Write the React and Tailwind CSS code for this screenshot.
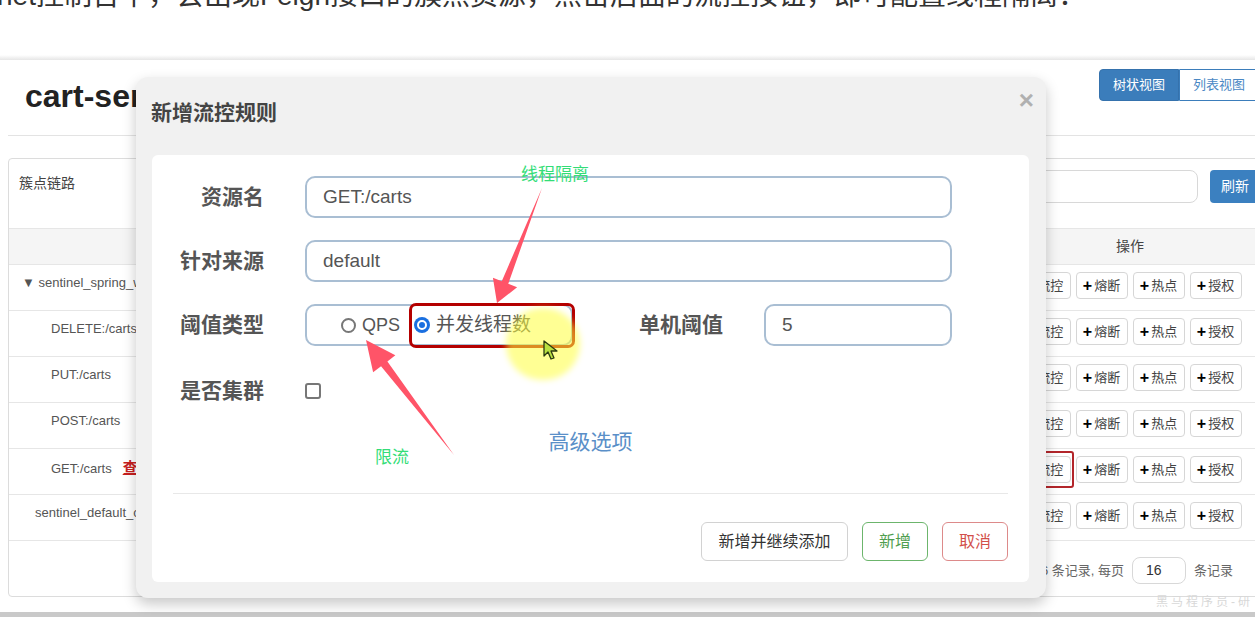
import React from "react";

const FONT = "font-['Liberation_Sans','Noto_Sans_CJK_SC',sans-serif]";

// simple tapered arrow polygon (tail -> tip)
function arrowPoints(tail, tip, headLen, headW, shaftW) {
    const dx = tip[0] - tail[0];
    const dy = tip[1] - tail[1];
    const len = Math.hypot(dx, dy);
    const ux = dx / len;
    const uy = dy / len;
    const px = -uy;
    const py = ux;
    const bx = tip[0] - ux * headLen;
    const by = tip[1] - uy * headLen;
    const pts = [
        tail,
        [bx + (px * shaftW) / 2, by + (py * shaftW) / 2],
        [bx + (px * headW) / 2, by + (py * headW) / 2],
        tip,
        [bx - (px * headW) / 2, by - (py * headW) / 2],
        [bx - (px * shaftW) / 2, by - (py * shaftW) / 2],
    ];
    return pts.map((p) => p.join(",")).join(" ");
}

const rows = [
    { name: "▼ sentinel_spring_web_context", pad: "pl-[13px]" },
    { name: "DELETE:/carts", pad: "pl-[42px]" },
    { name: "PUT:/carts", pad: "pl-[42px]" },
    { name: "POST:/carts", pad: "pl-[42px]" },
    { name: "GET:/carts", pad: "pl-[42px]", mark: true },
    { name: "sentinel_default_context", pad: "pl-[26px]" },
];

function ActionBtn({ label, highlight }) {
    return (
        <div className="relative">
            <div className="w-[52px] h-[27px] flex items-center justify-center gap-[2px] border border-[#d6d6d6] rounded-[4px] bg-white text-[13px] text-[#444]">
                <span className="font-bold text-[16px] text-black leading-none">+</span>
                <span>{label}</span>
            </div>
            {highlight && (
                <div className="absolute -left-[4px] -top-[5px] w-[59px] h-[37px] border-2 border-[#b3262b] rounded-[3px]" />
            )}
        </div>
    );
}

function Field({ label, children, className = "" }) {
    return (
        <div className={`flex items-center h-[42px] ${className}`}>
            <div className="w-[112px] text-right text-[21px] font-bold text-[#555]">
                {label}
            </div>
            <div className="ml-[41px] flex items-center">{children}</div>
        </div>
    );
}

export default function App() {
    return (
        <div className={`relative w-[1255px] h-[617px] overflow-hidden bg-white ${FONT}`}>
            {/* cut-off caption on top */}
            <div className="h-[55px] overflow-hidden">
                <p className="-mt-[20px] -ml-[3px] whitespace-nowrap text-[28px] leading-[32px] text-[#333]">
                    net控制台中，会出现Feign接口的簇点资源，点击后面的流控按钮，即可配置线程隔离：
                </p>
            </div>
            <div className="h-[5px] bg-gradient-to-b from-white to-[#e6e6e6]" />

            {/* sentinel page */}
            <div className="w-[1290px] px-2">
                <div className="flex h-[75px]">
                    <h1 className="pl-[17px] pt-[12px] text-[32px] font-bold text-[#222]">
                        cart-service
                    </h1>
                    <div className="ml-auto mr-[23px] mt-[9px] flex h-[32px] text-[13px]">
                        <div className="w-[80px] flex items-center justify-center bg-[#3b7dbb] text-white rounded-l-[4px] border border-[#3572ad]">
                            树状视图
                        </div>
                        <div className="w-[80px] flex items-center justify-center bg-white text-[#4a88c4] border border-[#3b7dbb] rounded-r-[4px]">
                            列表视图
                        </div>
                    </div>
                </div>
                <div className="border-t border-[#e3e3e3]" />

                <div className="mt-[22px] h-[439px] border border-[#dcdcdc] rounded-[4px]">
                    <div className="flex h-[69px]">
                        <div className="pl-[10px] pt-[14px] text-[14px] text-[#444]">簇点链路</div>
                        <div className="ml-auto mr-[21px] mt-[11px] flex gap-[12px]">
                            <div className="w-[170px] h-[33px] border border-[#d8d8d8] rounded-[8px]" />
                            <div className="w-[50px] h-[33px] flex items-center justify-center bg-[#3b80c0] text-white text-[14px] rounded-[4px]">
                                刷新
                            </div>
                        </div>
                    </div>
                    <div className="flex h-[37px] bg-[#f5f5f5] border-t border-b border-[#e6e6e6] text-[14px] text-[#444]">
                        <div className="flex-1" />
                        <div className="w-[260px] mr-[21px] flex items-center justify-center">操作</div>
                    </div>
                    {rows.map((r) => (
                        <div key={r.name} className="flex h-[46px] border-b border-[#e6e6e6]">
                            <div className={`flex-1 pt-[8px] ${r.pad} text-[13px] leading-[20px] text-[#555]`}>
                                {r.name}
                                {r.mark && (
                                    <span className="ml-[11px] text-[15px] font-bold text-[#c62020] underline font-['Noto_Sans_CJK_SC',serif]">
                                        查
                                    </span>
                                )}
                            </div>
                            <div className="w-[260px] mr-[21px] pt-[7px] flex justify-center gap-[5px]">
                                <ActionBtn label="流控" highlight={r.mark} />
                                <ActionBtn label="熔断" />
                                <ActionBtn label="热点" />
                                <ActionBtn label="授权" />
                            </div>
                        </div>
                    ))}
                    <div className="flex justify-end items-center mt-[16px] mr-[48px] gap-[8px] text-[13px] text-[#666]">
                        <span>共 6 条记录, 每页</span>
                        <div className="w-[54px] h-[27px] border border-[#d8d8d8] rounded-[8px] flex items-center pl-[13px] text-[14px] text-[#333]">
                            16
                        </div>
                        <span>条记录</span>
                    </div>
                </div>
            </div>

            {/* watermark + bottom bar */}
            <div className="absolute right-[2px] bottom-[6px] text-[12px] tracking-[3px] text-[#d8d8d8]">
                黑马程序员-研
            </div>
            <div className="absolute left-0 right-0 bottom-0 h-[5px] bg-[#c9c9c9]" />

            {/* modal */}
            <div className="absolute left-[136px] top-[77px] w-[910px] h-[521px] bg-[#f1f1f1] rounded-[12px] shadow-[0_6px_14px_rgba(0,0,0,0.22)]">
                <div className="flex h-[78px]">
                    <h2 className="pl-[15px] pt-[20px] text-[21px] font-bold text-[#444]">新增流控规则</h2>
                    <div className="ml-auto mr-[12px] mt-[4px] text-[26px] text-[#b0b0b0] font-bold">×</div>
                </div>
                <div className="ml-[16px] mr-[17px] h-[427px] bg-white rounded-[6px] pt-[21px]">
                    <Field label="资源名">
                        <div className="w-[647px] h-[42px] border-2 border-[#a9bed3] rounded-[10px] flex items-center pl-[16px] text-[19px] text-[#555]">
                            GET:/carts
                        </div>
                    </Field>
                    <Field label="针对来源" className="mt-[22px]">
                        <div className="w-[647px] h-[42px] border-2 border-[#a9bed3] rounded-[10px] flex items-center pl-[16px] text-[19px] text-[#555]">
                            default
                        </div>
                    </Field>
                    <Field label="阈值类型" className="mt-[22px]">
                        <div className="relative w-[268px] h-[42px] border-2 border-[#a9bed3] rounded-[10px] flex items-center pl-[34px] text-[#555]">
                            <span className="w-[15px] h-[15px] rounded-full border-2 border-[#777] bg-white" />
                            <span className="ml-[6px] text-[18px]">QPS</span>
                            <span className="ml-[14px] w-[16px] h-[16px] rounded-full bg-[#1a6fe0] flex items-center justify-center">
                                <span className="w-[10px] h-[10px] rounded-full border-2 border-white bg-[#1a6fe0]" />
                            </span>
                            <span className="ml-[6px] text-[19px]">并发线程数</span>
                            <div className="absolute left-[102px] -top-[3px] w-[166px] h-[45px] border-[3px] border-[#b40000] rounded-[7px]" />
                            <div className="absolute left-[199px] top-[2px] w-[74px] h-[72px] rounded-full bg-[rgba(255,255,60,0.55)] blur-[3px]" />
                            <svg className="absolute left-[236px] top-[34px]" width="16" height="20" viewBox="0 0 16 20">
                                <path d="M1 1 L1 16 L5 12 L8 19 L11 18 L8 11 L14 11 Z" fill="#b8e040" stroke="#2b3a10" strokeWidth="1.3" strokeLinejoin="round" />
                            </svg>
                        </div>
                        <div className="w-[150px] text-right text-[21px] font-bold text-[#555]">单机阈值</div>
                        <div className="ml-[41px] w-[188px] h-[42px] border-2 border-[#a9bed3] rounded-[10px] flex items-center pl-[16px] text-[19px] text-[#555]">
                            5
                        </div>
                    </Field>
                    <Field label="是否集群" className="mt-[24px]">
                        <span className="w-[16px] h-[16px] rounded-[3px] border-2 border-[#777]" />
                    </Field>
                    <div className="mt-[16px] text-center text-[21px] leading-[28px] text-[#5a8fc8]">高级选项</div>
                    <div className="mx-[21px] mt-[37px] border-t border-[#e8e8e8]" />
                    <div className="mt-[28px] mr-[21px] flex justify-end gap-[14px] text-[16px]">
                        <div className="w-[147px] h-[39px] border border-[#d2d2d2] rounded-[6px] flex items-center justify-center text-[#333]">
                            新增并继续添加
                        </div>
                        <div className="w-[66px] h-[39px] border border-[#6cb56c] rounded-[6px] flex items-center justify-center text-[#4f9e4f]">
                            新增
                        </div>
                        <div className="w-[66px] h-[39px] border border-[#dd8a8a] rounded-[6px] flex items-center justify-center text-[#d2504b]">
                            取消
                        </div>
                    </div>
                </div>
            </div>

            {/* annotations */}
            <svg className="absolute left-0 top-0 pointer-events-none" width="1255" height="617">
                <polygon points={arrowPoints([542, 188], [497, 303], 22, 26, 7)} fill="#ff5468" />
                <polygon points={arrowPoints([454, 455], [366, 340], 30, 28, 8)} fill="#ff5468" />
            </svg>
            <div className="absolute left-[521px] top-[163px] text-[17px] leading-[20px] text-[#33dd77] font-['Noto_Sans_CJK_SC',sans-serif]">
                线程隔离
            </div>
            <div className="absolute left-[375px] top-[446px] text-[17px] leading-[20px] text-[#33dd77] font-['Noto_Sans_CJK_SC',sans-serif]">
                限流
            </div>
        </div>
    );
}
